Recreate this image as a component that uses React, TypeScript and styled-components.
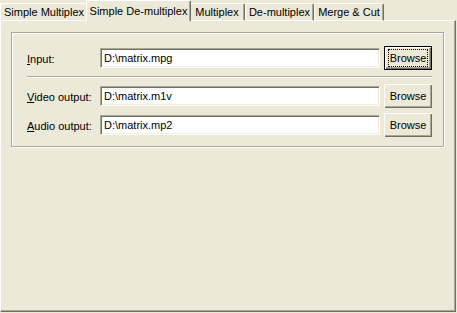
import styled, { createGlobalStyle } from "styled-components";

const GlobalStyle = createGlobalStyle`
  html, body {
    margin: 0;
    padding: 0;
    background: #ece9d8;
  }
  body {
    font-family: "Liberation Sans", Arial, sans-serif;
    font-size: 11px;
    color: #000;
  }
`;

const Window = styled.div`
  width: 457px;
  height: 313px;
  display: flex;
  flex-direction: column;
  background: #ece9d8;
  overflow: hidden;
`;

const TabStrip = styled.div`
  display: flex;
  align-items: flex-end;
  height: 21px;
  margin-bottom: -1px;
  position: relative;
  z-index: 1;
`;

const Tab = styled.div<{ $w: number; $active?: boolean }>`
  box-sizing: border-box;
  width: ${(p) => (p.$active ? p.$w + 4 : p.$w)}px;
  height: ${(p) => (p.$active ? 21 : 18)}px;
  margin: 0 ${(p) => (p.$active ? -2 : 0)}px;
  position: relative;
  z-index: ${(p) => (p.$active ? 2 : 1)};
  display: flex;
  align-items: ${(p) => (p.$active ? "flex-start" : "center")};
  justify-content: center;
  padding-top: ${(p) => (p.$active ? 4 : 0)}px;
  background: #ece9d8;
  border-left: 1px solid #fff;
  border-top: 1px solid #fff;
  border-right: 1px solid #716f64;
  box-shadow: inset -1px 0 0 #aca899;
  border-top-left-radius: 2px;
  border-top-right-radius: 2px;
  border-bottom: ${(p) => (p.$active ? "none" : "1px solid #fff")};
  white-space: nowrap;
`;

const Panel = styled.div`
  box-sizing: border-box;
  width: 456px;
  height: 292px;
  border-left: 1px solid #fff;
  border-top: 1px solid #fff;
  border-right: 1px solid #716f64;
  border-bottom: 1px solid #716f64;
  box-shadow: inset -1px -1px 0 #aca899;
  padding: 11px 10px 0 10px;
`;

const GroupBox = styled.div`
  box-sizing: border-box;
  width: 433px;
  height: 115px;
  border: 1px solid #aca899;
  box-shadow: 1px 1px 0 #fff, inset 1px 1px 0 #fff;
  padding: 13px 11px 0 15px;
  display: flex;
  flex-direction: column;
`;

const Row = styled.div<{ $gap?: number }>`
  display: flex;
  align-items: center;
  height: 24px;
  margin-top: ${(p) => p.$gap ?? 0}px;
`;

const Label = styled.label`
  width: 73px;
  flex: none;
  padding-top: 1px;
  u {
    text-decoration: underline;
  }
`;

const Field = styled.div`
  box-sizing: border-box;
  width: 280px;
  height: 20px;
  background: #fff;
  border-top: 1px solid #aca899;
  border-left: 1px solid #aca899;
  border-right: 1px solid #fff;
  border-bottom: 1px solid #fff;
  box-shadow: inset 1px 1px 0 #716f64, inset -1px -1px 0 #f1efe2;
  padding: 0 3px;
  display: flex;
  align-items: center;
`;

const Button = styled.button<{ $default?: boolean }>`
  box-sizing: border-box;
  width: 48px;
  height: 24px;
  margin-left: 4px;
  padding: 0;
  font: inherit;
  color: #000;
  background: #ece9d8;
  border: ${(p) => (p.$default ? "1px solid #000" : "none")};
  box-shadow: ${(p) =>
    p.$default
      ? "inset 1px 1px 0 #fff, inset -1px -1px 0 #716f64, inset -2px -2px 0 #aca899"
      : "inset 1px 1px 0 #fff, inset -1px -1px 0 #716f64, inset -2px -2px 0 #aca899"};
  display: flex;
  align-items: center;
  justify-content: center;
`;

const Focus = styled.span`
  box-sizing: border-box;
  width: 38px;
  height: 16px;
  outline: 1px dotted #000;
  display: flex;
  align-items: center;
  justify-content: center;
`;

const Separator = styled.div`
  height: 1px;
  width: 405px;
  margin-top: 6px;
  background: #aca899;
  border-bottom: 1px solid #fff;
`;

const tabs = [
  { label: "Simple Multiplex", w: 88 },
  { label: "Simple De-multiplex", w: 101, active: true },
  { label: "Multiplex", w: 56 },
  { label: "De-multiplex", w: 69 },
  { label: "Merge & Cut", w: 70 },
];

export default function App() {
  return (
    <>
      <GlobalStyle />
      <Window>
        <TabStrip>
          {tabs.map((t) => (
            <Tab key={t.label} $w={t.w} $active={t.active}>
              {t.label}
            </Tab>
          ))}
        </TabStrip>
        <Panel>
          <GroupBox>
            <Row>
              <Label>
                <u>I</u>nput:
              </Label>
              <Field>D:\matrix.mpg</Field>
              <Button $default>
                <Focus>Browse</Focus>
              </Button>
            </Row>
            <Separator />
            <Row $gap={6}>
              <Label>
                <u>V</u>ideo output:
              </Label>
              <Field>D:\matrix.m1v</Field>
              <Button>Browse</Button>
            </Row>
            <Row $gap={5}>
              <Label>
                <u>A</u>udio output:
              </Label>
              <Field>D:\matrix.mp2</Field>
              <Button>Browse</Button>
            </Row>
          </GroupBox>
        </Panel>
      </Window>
    </>
  );
}
